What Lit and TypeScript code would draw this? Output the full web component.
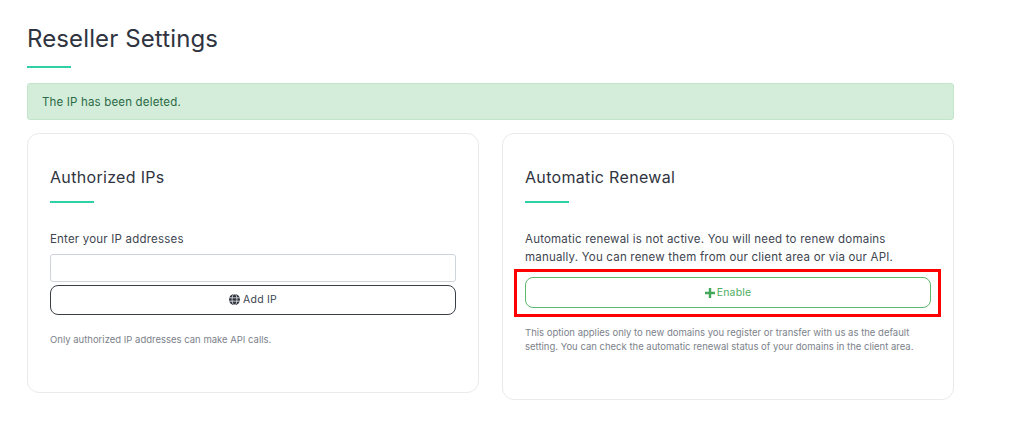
import { LitElement, html, css } from "lit";
import { customElement } from "lit/decorators.js";

@customElement("app-root")
export class AppRoot extends LitElement {
  static styles = css`
    :host { display: block; position: relative; height: 437px; overflow: hidden; background: #fff; font-family: Inter, "Liberation Sans", sans-serif; color: #343a40; }
    .page { width: 927px; margin-left: 27px; padding-top: 24px; }
    h1 { margin: 0; font-size: 24px; line-height: 30px; font-weight: 400; color: #2f3440; letter-spacing: 0.12px; }
    .rule { width: 44px; height: 2px; background: #2fd0a5; }
    .page > .rule { margin-top: 12px; }
    .alert { margin-top: 15px; height: 37px; box-sizing: border-box; padding-left: 14px; display: flex; align-items: center; background: #d4edda; border: 1px solid #c3e6cb; border-radius: 3px; color: #2a6a45; font-size: 11.5px; letter-spacing: 0.17px; }
    .cols { display: grid; grid-template-columns: 452px 452px; column-gap: 23px; align-items: start; margin-top: 13px; }
    .card { box-sizing: border-box; border: 1px solid #e9eaec; border-radius: 12px; padding: 33px 22px 0; }
    .c1 { height: 260px; }
    .c2 { height: 267px; }
    h2 { margin: 0; font-size: 16px; line-height: 20px; font-weight: 400; color: #2f3440; letter-spacing: 0.32px; }
    .card .rule { margin-top: 14px; }
    .label, .para { font-size: 11.5px; line-height: 18px; color: #40454f; letter-spacing: 0.2px; }
    .label { margin-top: 27px; }
    .para { margin-top: 27px; }
    .input { box-sizing: border-box; height: 28px; margin-top: 6px; border: 1px solid #ced4da; border-radius: 3px; }
    .btn { box-sizing: border-box; height: 30px; margin-top: 3px; border: 1px solid #3a3e46; border-radius: 8px; display: flex; align-items: center; justify-content: center; gap: 3px; font-size: 10.5px; letter-spacing: 0.2px; color: #40454f; padding-bottom: 2px; }
    .btn svg { display: block; }
    .enable { margin-top: 11px; gap: 2px; border-color: #5cb96f; color: #4fae63; height: 31px; padding-bottom: 0; }
    .hint { font-size: 9.5px; line-height: 14px; color: #7c828b; letter-spacing: 0; }
    .c1 .hint { margin-top: 18px; }
    .c2 .hint { margin-top: 18px; }
    .mark { position: absolute; left: 514px; top: 269px; width: 427px; height: 48px; box-sizing: border-box; border: 3px solid #f00; pointer-events: none; }
  `;

  render() {
    return html`
      <div class="page">
        <h1>Reseller Settings</h1>
        <div class="rule"></div>
        <div class="alert">The IP has been deleted.</div>
        <div class="cols">
          <section class="card c1">
            <h2>Authorized IPs</h2>
            <div class="rule"></div>
            <div class="label">Enter your IP addresses</div>
            <div class="input"></div>
            <div class="btn">
              <svg width="11" height="11" viewBox="0 0 11 11" fill="none" stroke="#2f3440">
                <circle cx="5.5" cy="5.5" r="5.5" fill="#2f3440" stroke="none"/>
                <ellipse cx="5.5" cy="5.5" rx="2.4" ry="5.2" stroke="#fff" stroke-width=".7"/>
                <path d="M0 3.8h11M0 7.2h11" stroke="#fff" stroke-width=".7"/>
              </svg>
              Add IP
            </div>
            <div class="hint">Only authorized IP addresses can make API calls.</div>
          </section>
          <section class="card c2">
            <h2>Automatic Renewal</h2>
            <div class="rule"></div>
            <div class="para">Automatic renewal is not active. You will need to renew domains manually. You can renew them from our client area or via our API.</div>
            <div class="btn enable">
              <svg width="10" height="10" viewBox="0 0 10 10"><path d="M5 0v10M0 5h10" stroke="#43a75a" stroke-width="2.4"/></svg>
              Enable
            </div>
            <div class="hint">This option applies only to new domains you register or transfer with us as the default setting. You can check the automatic renewal status of your domains in the client area.</div>
          </section>
        </div>
      </div>
      <div class="mark"></div>
    `;
  }
}
